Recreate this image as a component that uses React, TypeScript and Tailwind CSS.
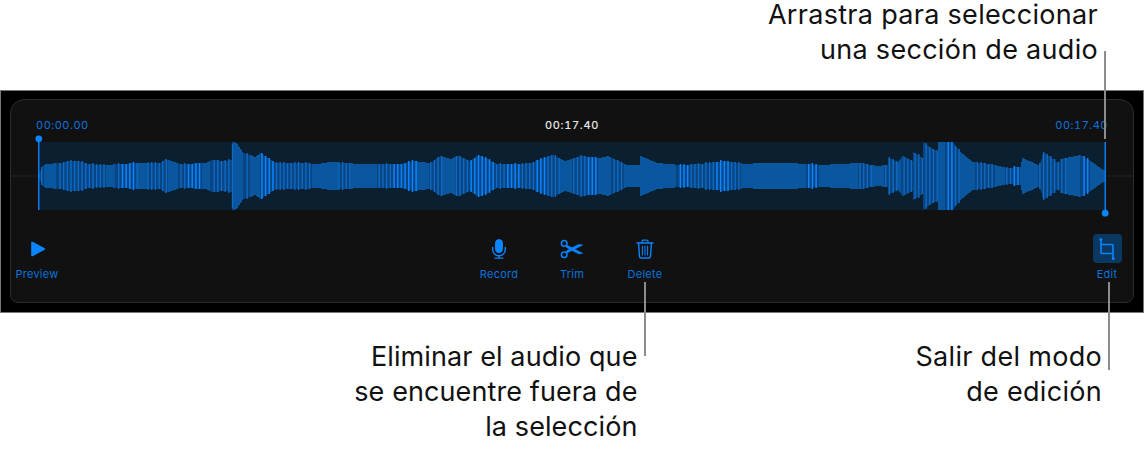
import React from 'react';

// envelope of the recording: [page x, half height]
const ENVELOPE: [number, number][] = [
    [39, 3], [42, 10], [45, 12], [60, 13], [70, 15], [78, 15], [88, 12], [100, 11], [125, 12], [135, 13],
    [160, 13], [165, 17], [180, 12], [205, 13], [212, 16], [225, 15], [231, 16], [232, 34], [236, 33],
    [243, 23], [250, 21], [255, 19], [260, 23], [275, 13], [300, 13], [318, 12], [330, 14], [360, 12],
    [380, 12], [400, 12], [413, 15], [430, 13], [440, 20], [450, 17], [458, 20], [470, 15], [478, 21],
    [497, 12], [520, 12], [530, 13], [552, 21], [565, 15], [580, 20], [600, 18], [607, 20], [627, 11],
    [639, 11], [640, 20], [657, 13], [680, 11], [700, 12], [723, 15], [745, 12], [760, 13], [790, 13],
    [820, 11], [860, 13], [877, 10], [887, 11], [888, 18], [898, 14], [902, 20], [912, 15], [913, 24],
    [922, 18], [923, 34], [930, 28], [937, 25], [938, 34], [952, 34], [960, 24], [972, 14], [990, 12],
    [1007, 8], [1020, 9], [1022, 18], [1038, 11], [1040, 14], [1043, 24], [1058, 13], [1060, 17], [1080, 21],
    [1090, 15], [1100, 8], [1105, 5],
];

const halfHeight = (x: number) => {
    for (let i = 1; i < ENVELOPE.length; i++) {
        const [x0, h0] = ENVELOPE[i - 1];
        const [x1, h1] = ENVELOPE[i];
        if (x <= x1) return h0 + ((h1 - h0) * (x - x0)) / (x1 - x0 || 1);
    }
    return 4;
};

const hash = (n: number) => {
    const s = Math.sin(n * 12.9898) * 43758.5453;
    return s - Math.floor(s);
};

const inRanges = (x: number, ranges: [number, number][]) => ranges.some(([a, b]) => x >= a && x < b);

const SOLID: [number, number][] = [
    [44, 56], [106, 115], [137, 147], [168, 178], [202, 210], [233, 243], [938, 945], [960, 975], [995, 1005], [1020, 1038],
];
const BRIGHT: [number, number][] = [
    [120, 135], [185, 200], [945, 953], [1012, 1018], [1080, 1090],
];

// 0: solid block, 1: dim stripes, 2: bright stripes
const modeAt = (x: number) => {
    if (inRanges(x, SOLID)) return 0;
    if (inRanges(x, BRIGHT)) return 2;
    if (x < 250 || (x > 900 && x < 1060)) return 1;
    const r = hash(Math.floor(x / 13));
    return r < 0.35 ? 0 : r < 0.72 ? 1 : 2;
};

const COLUMNS = Array.from({ length: 1066 }, (_, i) => 39 + i);
const STRIPES = Array.from({ length: 290 }, (_, i) => 41 + i * 3.67);

const Waveform = () => (
    <svg className="block" width={1122} height={86} viewBox="11 131 1122 86">
        <rect x={39} y={142} width={1066} height={68} fill="#0c1f2f" />
        <line x1={11} x2={39} y1={176} y2={176} stroke="#333" strokeDasharray="1 1" />
        <line x1={1106} x2={1133} y1={176} y2={176} stroke="#333" strokeDasharray="1 1" />
        {COLUMNS.map(x => {
            const h = Math.round(halfHeight(x));
            return <rect key={x} x={x} y={176 - h} width={1} height={h * 2} fill={modeAt(x) === 0 ? '#0a569f' : '#0a4583'} />;
        })}
        {STRIPES.filter(x => x < 1103 && modeAt(x) !== 0).map(x => {
            const h = Math.min(34, Math.round(halfHeight(x)) + (hash(x) > 0.5 ? 1 : 0));
            return (
                <rect
                    key={x}
                    x={x}
                    y={176 - h}
                    width={modeAt(x) === 2 ? 1.5 : 1.3}
                    height={h * 2}
                    fill={modeAt(x) === 2 ? '#0a84ff' : '#0f6cc6'}
                />
            );
        })}
        <rect x={38} y={139} width={1.5} height={71} fill="#0a7cf0" />
        <circle cx={38.8} cy={138.8} r={3.4} fill="#0a84ff" />
        <rect x={1104.5} y={142} width={1.5} height={71} fill="#0a7cf0" />
        <circle cx={1105.2} cy={213.2} r={3.4} fill="#0a84ff" />
    </svg>
);

const PlayIcon = () => (
    <svg width={24} height={24} viewBox="0 0 24 24" fill="#0a84ff">
        <path d="M6.2 5.6c0-.8.8-1.2 1.5-.8l12 6.4c.7.4.7 1.2 0 1.6l-12 6.4c-.7.4-1.5 0-1.5-.8z" />
    </svg>
);

const MicIcon = () => (
    <svg width={24} height={24} viewBox="0 0 24 24" fill="none" stroke="#0a84ff">
        <rect x={8.6} y={2.6} width={6.8} height={13} rx={3.4} fill="#0a84ff" />
        <path d="M5.7 10.5v2a6.3 6.3 0 0 0 12.6 0v-2" strokeWidth={1.4} strokeLinecap="round" />
        <path d="M12 18.8v2.4M8 21.2h8" strokeWidth={1.3} strokeLinecap="round" />
    </svg>
);

const ScissorsIcon = () => (
    <svg width={24} height={24} viewBox="0 0 24 24" fill="none" stroke="#0a84ff" strokeWidth={1.5}>
        <circle cx={4.2} cy={6.4} r={2.8} />
        <circle cx={4.2} cy={17.8} r={2.8} />
        <path d="M6.6 8 23 16.2l-4.4.8L6.4 10.4z" fill="#0a84ff" strokeWidth={0.4} />
        <path d="M6.6 16.2 23 8l-4.4-.8L6.4 13.8z" fill="#0a84ff" strokeWidth={0.4} />
    </svg>
);

const TrashIcon = () => (
    <svg width={24} height={24} viewBox="0 0 24 24" fill="none" stroke="#0a84ff" strokeLinecap="round">
        <path d="M4 6h16" strokeWidth={1.4} />
        <path d="M9 5.6V4.4c0-.8.5-1.3 1.3-1.3h3.4c.8 0 1.3.5 1.3 1.3v1.2" strokeWidth={1.2} />
        <path d="M5.6 6.4 6.5 19.4c.1 1 .8 1.6 1.7 1.6h7.6c.9 0 1.6-.6 1.7-1.6l.9-13" strokeWidth={1.4} />
        <path d="M9.4 9v9M12 9v9M14.6 9v9" strokeWidth={1.1} />
    </svg>
);

const CropIcon = () => (
    <svg width={24} height={24} viewBox="0 0 24 24" fill="none" stroke="#0a84ff" strokeWidth={1.6}>
        <path d="M6 2.5v13c0 .7.4 1 1 1h11" />
        <path d="M6 7.5h11c.7 0 1 .4 1 1v13" />
        <circle cx={5.8} cy={2.5} r={1.5} fill="#0a84ff" stroke="none" />
        <circle cx={18.2} cy={21.5} r={1.5} fill="#0a84ff" stroke="none" />
    </svg>
);

const ToolButton = ({ label, width, active, children }: {
    label: string;
    width: string;
    active?: boolean;
    children: React.ReactNode;
}) => (
    <div className={`flex flex-col items-center ${width}`}>
        <div className={`flex h-[29px] w-[29px] items-center justify-center rounded-[4px] ${active ? 'bg-[#0a3861]' : ''}`}>
            {children}
        </div>
        <span className="mt-[3px] text-[11px] leading-[16px] tracking-[0.25px] text-[#0a74dc]">{label}</span>
    </div>
);

const Callout = ({ lines, className }: { lines: string[]; className?: string }) => (
    <p className={`flex flex-col gap-[6px] text-right text-[27px] leading-[29px] text-[#111] ${className ?? ''}`}>
        {lines.map(l => <span key={l} className="block whitespace-nowrap">{l}</span>)}
    </p>
);

export default function App() {
    return (
        <div className="relative h-[452px] w-[1144px] overflow-hidden bg-white font-['Inter','Liberation_Sans',sans-serif]">
            {/* 説明テキスト（上） */}
            <div className="flex h-[90px] justify-end pr-[46px]">
                <Callout lines={['Arrastra para seleccionar', 'una sección de audio']} className="tracking-[0.3px]" />
            </div>

            {/* パネル */}
            <div className="h-[223px] border border-[#777] bg-black px-[9px] pt-[8px]">
                <div className="h-[204px] rounded-[14px] rounded-b-[8px] border border-[#2b2b2b] bg-[#111]">
                    <div className="flex items-center justify-between px-[25px] pt-[19px] text-[11px] leading-[12px] tracking-[0.5px] tabular-nums">
                        <span className="text-[#0a74dc]">00:00.00</span>
                        <span className="font-medium tracking-[0.65px] text-[#e8e8e8]">00:17.40</span>
                        <span className="text-[#0a74dc]">00:17.40</span>
                    </div>
                    <Waveform />
                    <div className="mt-[17px] grid grid-cols-3">
                        <div className="flex justify-start">
                            <ToolButton label="Preview" width="w-[52px]"><PlayIcon /></ToolButton>
                        </div>
                        <div className="flex justify-center">
                            <ToolButton label="Record" width="w-[73px]"><MicIcon /></ToolButton>
                            <ToolButton label="Trim" width="w-[73px]"><ScissorsIcon /></ToolButton>
                            <ToolButton label="Delete" width="w-[73px]"><TrashIcon /></ToolButton>
                        </div>
                        <div className="flex justify-end">
                            <ToolButton label="Edit" width="w-[52px]" active><CropIcon /></ToolButton>
                        </div>
                    </div>
                </div>
            </div>

            {/* 説明テキスト（下） */}
            <div className="flex justify-end pt-[29px]">
                <Callout lines={['Eliminar el audio que', 'se encuentre fuera de', 'la selección']} className="mr-[278px] tracking-[0.1px]" />
                <Callout lines={['Salir del modo', 'de edición']} className="mr-[42px] tracking-[0.3px]" />
            </div>

            {/* 引き出し線 */}
            <div className="absolute left-[1104px] top-[51px] h-[88px] w-[2px] bg-[#8c8c8c]" />
            <div className="absolute left-[644px] top-[282px] h-[74px] w-[2px] bg-[#8c8c8c]" />
            <div className="absolute left-[1108px] top-[282px] h-[88px] w-[2px] bg-[#8c8c8c]" />
        </div>
    );
}
